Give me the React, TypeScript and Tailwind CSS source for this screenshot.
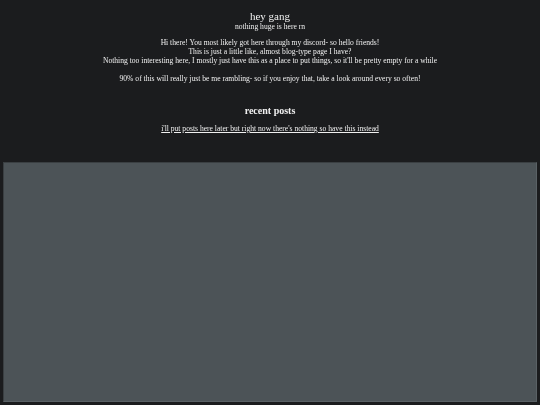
import React from "react";

export default function App() {
  return (
    <div className="w-[540px] h-[405px] bg-[#1b1c1e] text-[#f0f0f0] overflow-hidden flex flex-col items-center antialiased will-change-transform" style={{ fontFamily: '"Liberation Serif", "Times New Roman", serif' }}>
      <div className="text-[11px] leading-[12px] mt-[10px]">hey gang</div>
      <div className="text-[7.6px] leading-[9px] mt-[0px]">nothing huge is here rn</div>
      <div className="text-[7.6px] leading-[9px] text-center mt-[7px]">
        <div>Hi there! You most likely got here through my discord- so hello friends!</div>
        <div>This is just a little like, almost blog-type page I have?</div>
        <div>Nothing too interesting here, I mostly just have this as a place to put things, so it'll be pretty empty for a while</div>
        <div className="mt-[9px]">90% of this will really just be me rambling- so if you enjoy that, take a look around every so often!</div>
      </div>
      <div className="text-[10px] leading-[12px] font-bold mt-[22px]">recent posts</div>
      <a className="text-[7.6px] leading-[9px] underline mt-[7px]">i'll put posts here later but right now there's nothing so have this instead</a>
      <div className="mt-[29px] w-[534px] h-[240px] shrink-0 bg-[#4c5357] border border-t-[#3a3f42] border-l-[#3a3f42] border-b-[#5a6165] border-r-[#5a6165]"></div>
    </div>
  );
}
